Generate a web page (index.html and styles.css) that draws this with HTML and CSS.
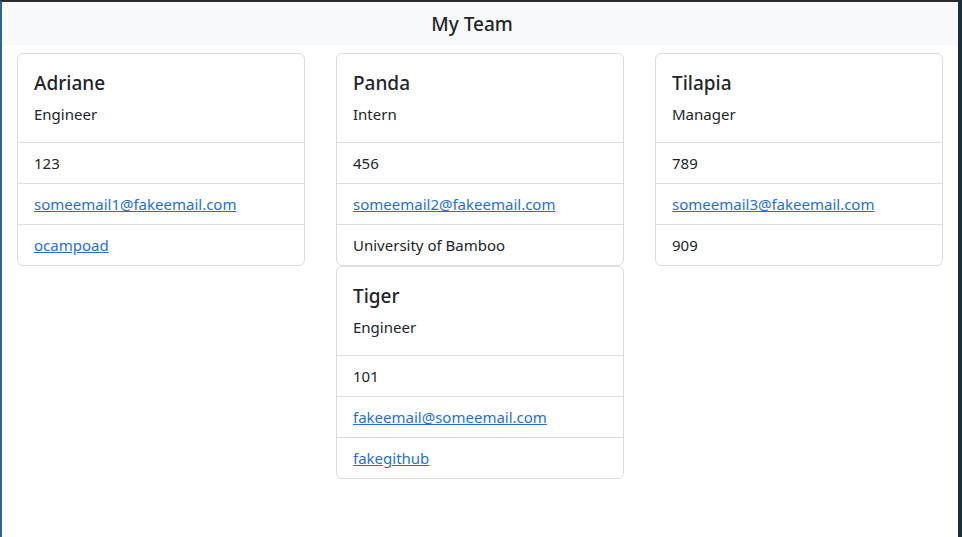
FILE: index.html
```html
<!DOCTYPE html>
<html lang="en">
<head>
<meta charset="utf-8">
<title>My Team</title>
<link rel="stylesheet" href="styles.css">
</head>
<body>
<div class="frame">
  <header class="topbar"><h1 class="title">My Team</h1></header>
  <main class="team">
    <div class="card">
      <div class="card-body">
        <h2 class="card-title">Adriane</h2>
        <h3 class="card-subtitle">Engineer</h3>
      </div>
      <ul class="list">
        <li class="item">123</li>
        <li class="item"><a href="#">someemail1@fakeemail.com</a></li>
        <li class="item"><a href="#">ocampoad</a></li>
      </ul>
    </div>
    <div class="card">
      <div class="card-body">
        <h2 class="card-title">Panda</h2>
        <h3 class="card-subtitle">Intern</h3>
      </div>
      <ul class="list">
        <li class="item">456</li>
        <li class="item"><a href="#">someemail2@fakeemail.com</a></li>
        <li class="item">University of Bamboo</li>
      </ul>
    </div>
    <div class="card">
      <div class="card-body">
        <h2 class="card-title">Tilapia</h2>
        <h3 class="card-subtitle">Manager</h3>
      </div>
      <ul class="list">
        <li class="item">789</li>
        <li class="item"><a href="#">someemail3@fakeemail.com</a></li>
        <li class="item">909</li>
      </ul>
    </div>
    <div class="card">
      <div class="card-body">
        <h2 class="card-title">Tiger</h2>
        <h3 class="card-subtitle">Engineer</h3>
      </div>
      <ul class="list">
        <li class="item">101</li>
        <li class="item"><a href="#">fakeemail@someemail.com</a></li>
        <li class="item"><a href="#">fakegithub</a></li>
      </ul>
    </div>
  </main>
</div>
</body>
</html>
```
FILE: styles.css
```css
* { box-sizing: border-box; }
html, body { margin: 0; padding: 0; }
body {
  font-family: "Noto Sans", "Open Sans", sans-serif;
  font-size: 16px;
  line-height: 24px;
  color: #212529;
  background: #ffffff;
}
.frame {
  height: 537px;
  border-top: 2px solid #2b2b2b;
  border-left: 2px solid #2a6694;
  border-right: 4px solid #1d2d3c;
  background: #fff;
}
.topbar {
  height: 43px;
  background: #f8f9fa;
  display: flex;
  align-items: center;
  justify-content: center;
  padding-right: 16px;
}
.title {
  margin: 0;
  font-size: 19px;
  font-weight: 500;
  line-height: 24px;
}
.team {
  display: flex;
  flex-wrap: wrap;
  justify-content: center;
  column-gap: 31px;
  row-gap: 0;
  padding-top: 8px;
}
.card {
  width: 288px;
  border: 1px solid #dcdcdc;
  border-radius: 6px;
  background: #fff;
  overflow: hidden;
}
.card-body {
  padding: 17px 16px 16px;
}
.card-title {
  margin: 0 0 7px;
  font-size: 19px;
  font-weight: 500;
  line-height: 24px;
}
.card-subtitle {
  margin: 0;
  font-size: 15px;
  font-weight: 400;
  line-height: 24px;
}
.list {
  list-style: none;
  margin: 0;
  padding: 0;
}
.item {
  border-top: 1px solid #dcdcdc;
  padding: 8px 16px;
  font-size: 15px;
  line-height: 24px;
}
.item a {
  color: #1f6fde;
  text-decoration: underline;
}
```
